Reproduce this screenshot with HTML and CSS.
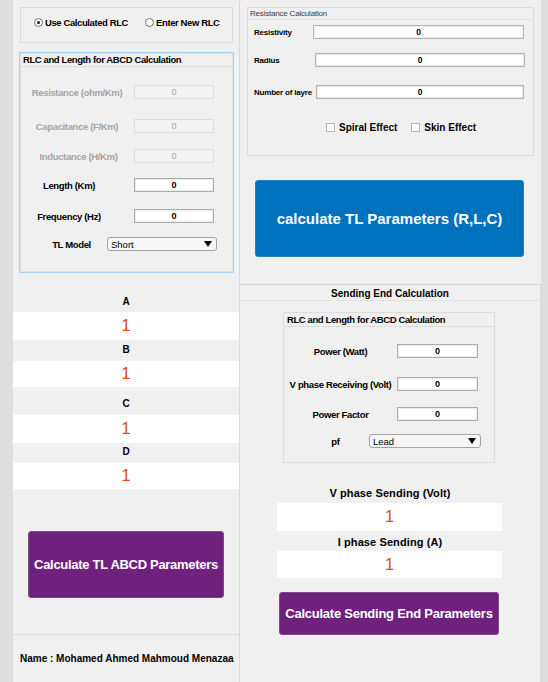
FILE: index.html
```html
<!DOCTYPE html>
<html>
<head>
<meta charset="utf-8">
<link rel="stylesheet" href="styles.css">
</head>
<body>
<div class="app">
  <div class="col-left">
    <div class="radio-box">
      <div class="radio"><span class="dot on"></span>Use Calculated RLC</div>
      <div class="radio radio-2"><span class="dot"></span>Enter New RLC</div>
    </div>

    <div class="panel panel-rlc">
      <div class="panel-title">RLC and Length for ABCD Calculation</div>
      <div class="rlc-body">
        <div class="frow">
          <div class="lbl dis">Resistance (ohm/Km)</div>
          <div class="field dis">0</div>
        </div>
        <div class="frow r2">
          <div class="lbl dis">Capacitance (F/Km)</div>
          <div class="field dis">0</div>
        </div>
        <div class="frow r3">
          <div class="lbl dis ind">Inductance (H/Km)</div>
          <div class="field dis">0</div>
        </div>
        <div class="frow r4">
          <div class="lbl en">Length (Km)</div>
          <div class="field">0</div>
        </div>
        <div class="frow r5">
          <div class="lbl en">Frequency (Hz)</div>
          <div class="field">0</div>
        </div>
        <div class="frow r6">
          <div class="lbl model">TL Model</div>
          <div class="select sel-model"><span>Short</span><svg class="caret" width="8" height="6" viewBox="0 0 8 6"><path d="M0 0H8L4 6Z" fill="#000"/></svg></div>
        </div>
      </div>
    </div>

    <div class="abcd">
      <div class="abcd-lbl la">A</div>
      <div class="abcd-val va">1</div>
      <div class="abcd-lbl lb">B</div>
      <div class="abcd-val vb">1</div>
      <div class="abcd-lbl lc">C</div>
      <div class="abcd-val va">1</div>
      <div class="abcd-lbl ld">D</div>
      <div class="abcd-val vb">1</div>
    </div>

    <div class="btn purple btn-abcd">Calculate TL ABCD Parameters</div>

    <div class="name-area">Name : Mohamed Ahmed Mahmoud Menazaa</div>
  </div>

  <div class="col-right">
    <div class="res-panel">
      <div class="res-title">Resistance Calculation</div>
      <div class="rrow rr1">
        <div class="rlbl">Resistivity</div>
        <div class="rfield w1">0</div>
      </div>
      <div class="rrow rr2">
        <div class="rlbl">Radius</div>
        <div class="rfield w2">0</div>
      </div>
      <div class="rrow rr3">
        <div class="rlbl">Number of layre</div>
        <div class="rfield w3">0</div>
      </div>
      <div class="checks">
        <div class="check"><span class="box"></span>Spiral Effect</div>
        <div class="check check-2"><span class="box"></span>Skin Effect</div>
      </div>
    </div>

    <div class="btn blue btn-tl">calculate TL Parameters (R,L,C)</div>

    <div class="sending">
      <div class="sending-title">Sending End Calculation</div>
      <div class="panel panel-send">
        <div class="panel-title">RLC and Length for ABCD Calculation</div>
        <div class="send-body">
          <div class="srow">
            <div class="slbl">Power (Watt)</div>
            <div class="field sfield">0</div>
          </div>
          <div class="srow s2">
            <div class="slbl">V phase Receiving (Volt)</div>
            <div class="field sfield">0</div>
          </div>
          <div class="srow s3">
            <div class="slbl">Power Factor</div>
            <div class="field sfield">0</div>
          </div>
          <div class="srow s4">
            <div class="slbl pf">pf</div>
            <div class="select sel-pf"><span>Lead</span><svg class="caret" width="8" height="6" viewBox="0 0 8 6"><path d="M0 0H8L4 6Z" fill="#000"/></svg></div>
          </div>
        </div>
      </div>

      <div class="out-lbl o1">V phase Sending (Volt)</div>
      <div class="out-val ov1">1</div>
      <div class="out-lbl o2">I phase Sending (A)</div>
      <div class="out-val ov2">1</div>

      <div class="btn purple btn-send">Calculate Sending End Parameters</div>
    </div>
  </div>
</div>
</body>
</html>
```

FILE: styles.css
```css
* { box-sizing: border-box; }
html, body { margin: 0; padding: 0; }
body {
  width: 548px;
  height: 682px;
  background: #dedede;
  font-family: "Liberation Sans", Arial, sans-serif;
  color: #000;
  overflow: hidden;
}
.app { display: flex; height: 682px; padding-left: 13px; }

.col-left {
  width: 227px;
  background: #f0f0f0;
  border-right: 1px solid #d9d9d9;
  display: flex;
  flex-direction: column;
}
.col-right {
  width: 301px;
  background: #f0f0f0;
  display: flex;
  flex-direction: column;
}

/* radio group */
.radio-box {
  margin: 7px 6px 0 7px;
  height: 36px;
  border: 1px solid #dadada;
  display: flex;
  align-items: flex-start;
  padding: 8px 0 0 13px;
}
.radio {
  display: flex;
  align-items: center;
  height: 12px;
  font-size: 9.5px;
  font-weight: bold;
  letter-spacing: -0.4px;
  white-space: nowrap;
}
.radio-2 { margin-left: 17px; }
.dot {
  width: 9px;
  height: 9px;
  border: 1px solid #6e6e6e;
  border-radius: 50%;
  background: #fff;
  margin-right: 2px;
  display: flex;
  align-items: center;
  justify-content: center;
}
.dot.on::after {
  content: "";
  width: 3px;
  height: 3px;
  border-radius: 50%;
  background: #1a1a1a;
}

/* panels */
.panel-rlc {
  margin: 9px 0 0 6px;
  width: 215px;
  height: 221px;
  border: 1px solid #a6d3f2;
  box-shadow: inset 0 0 0 1px #e2e2e2;
}
.panel-title {
  height: 14px;
  line-height: 13px;
  border-bottom: 1px solid #dcdcdc;
  padding-left: 3px;
  font-size: 9.5px;
  font-weight: bold;
  letter-spacing: -0.4px;
  white-space: nowrap;
}
.rlc-body { padding-top: 18px; display: flex; flex-direction: column; }
.frow { display: flex; align-items: center; height: 14px; }
.r2 { margin-top: 20px; }
.r3 { margin-top: 16px; }
.r4 { margin-top: 15px; }
.r5 { margin-top: 17px; }
.r6 { margin-top: 14px; }
.lbl {
  width: 114px;
  text-align: center;
  font-size: 9.5px;
  font-weight: bold;
  letter-spacing: -0.35px;
  white-space: nowrap;
}
.lbl.dis { color: #a4a4a4; }
.lbl.ind { padding-left: 3px; }
.lbl.en { padding-right: 16px; }
.lbl.model { width: 87px; padding-left: 16px; }

.field {
  width: 80px;
  height: 14px;
  background: #fff;
  border: 1px solid #adadad;
  box-shadow: inset 0 0 0 1px #ececec;
  font-size: 9px;
  font-weight: bold;
  text-align: center;
  line-height: 12px;
}
.field.dis {
  background: #f3f3f3;
  border-color: #dcdcdc;
  box-shadow: none;
  color: #a8a8a8;
  font-weight: normal;
}

.select {
  height: 14px;
  border: 1px solid #a3a3a3;
  border-radius: 3px;
  background: #f6f6f6;
  display: flex;
  align-items: center;
  justify-content: space-between;
  padding: 0 4px 0 3px;
  font-size: 9.5px;
}
.sel-model { width: 110px; }
.caret { display: block; }

/* ABCD */
.abcd { display: flex; flex-direction: column; }
.abcd-lbl {
  height: 12px;
  line-height: 12px;
  text-align: center;
  font-size: 10px;
  font-weight: bold;
}
.la { margin: 23px 0 4px; }
.lb { margin: 4px 0 5px; }
.lc { margin: 11px 0 5px; }
.ld { margin: 3px 0 5px; }
.abcd-val {
  background: #fff;
  text-align: center;
  color: #d95319;
  font-size: 17px;
}
.va { height: 28px; line-height: 28px; }
.vb { height: 26px; line-height: 26px; }

/* buttons */
.btn {
  color: #fff;
  font-weight: bold;
  display: flex;
  align-items: center;
  justify-content: center;
  border-radius: 3px;
  white-space: nowrap;
}
.purple { background: #70217e; border: 1px solid #7d4a87; }
.blue { background: #0071bd; border: 1px solid #2a7fbb; }
.btn-abcd {
  margin: 42px 0 0 15px;
  width: 196px;
  height: 67px;
  font-size: 13px;
  letter-spacing: -0.3px;
}
.btn-tl {
  margin: 24px 0 0 15px;
  width: 269px;
  height: 77px;
  font-size: 15px;
}
.btn-send {
  margin: 14px 0 0 39px;
  width: 220px;
  height: 43px;
  font-size: 13px;
  letter-spacing: -0.25px;
}

.name-area {
  margin-top: auto;
  height: 48px;
  border-top: 1px solid #dadada;
  padding: 18px 0 0 7px;
  line-height: 12px;
  font-size: 10px;
  font-weight: bold;
  white-space: nowrap;
}

/* resistance panel */
.res-panel {
  margin: 7px 0 0 7px;
  width: 287px;
  height: 149px;
  border: 1px solid #dcdcdc;
  display: flex;
  flex-direction: column;
}
.res-title {
  height: 12px;
  line-height: 11px;
  border-bottom: 1px solid #e2e2e2;
  padding-left: 2px;
  font-size: 8px;
  letter-spacing: -0.2px;
  color: #404040;
}
.rrow { display: flex; align-items: center; height: 14px; padding-left: 6px; }
.rr1 { margin-top: 5px; }
.rr2 { margin-top: 14px; }
.rr3 { margin-top: 18px; }
.rlbl {
  font-size: 8px;
  font-weight: bold;
  letter-spacing: -0.2px;
  white-space: nowrap;
}
.rfield {
  margin-left: auto;
  margin-right: 9px;
  height: 14px;
  background: #fff;
  border: 1px solid #b4b4b4;
  box-shadow: inset 0 0 0 1px #ececec;
  font-size: 8.5px;
  font-weight: bold;
  text-align: center;
  line-height: 12px;
}
.w1 { width: 211px; }
.w2 { width: 210px; margin-right: 8px; }
.w3 { width: 208px; }
.checks {
  display: flex;
  align-items: center;
  height: 11px;
  margin-top: 23px;
  padding-left: 78px;
}
.check {
  display: flex;
  align-items: center;
  font-size: 10px;
  font-weight: bold;
  white-space: nowrap;
}
.check-2 { margin-left: 14px; }
.box {
  width: 9px;
  height: 9px;
  background: #fff;
  border: 1px solid #b5b5b5;
  margin-right: 4px;
}

/* sending end */
.sending {
  margin-top: 27px;
  flex: 1;
  border-top: 1px solid #d4d4d4;
  border-right: 1px solid #dadada;
  display: flex;
  flex-direction: column;
}
.sending-title {
  height: 16px;
  padding-top: 2px;
  line-height: 13px;
  border-bottom: 1px solid #e2e2e2;
  text-align: center;
  font-size: 10px;
  font-weight: bold;
}
.panel-send {
  margin: 11px 0 0 43px;
  width: 212px;
  height: 151px;
  border: 1px solid #dcdcdc;
}
.send-body { padding-top: 17px; display: flex; flex-direction: column; }
.srow { display: flex; align-items: center; height: 14px; }
.s2 { margin-top: 19px; }
.s3 { margin-top: 16px; }
.s4 { margin-top: 13px; }
.slbl {
  width: 113px;
  text-align: center;
  font-size: 9.5px;
  font-weight: bold;
  letter-spacing: -0.35px;
  white-space: nowrap;
}
.slbl.pf { width: 85px; padding-left: 18px; }
.sfield { width: 81px; }
.sel-pf { width: 112px; }

.out-lbl {
  height: 12px;
  line-height: 12px;
  text-align: center;
  font-size: 11px;
  font-weight: bold;
  letter-spacing: 0.1px;
}
.o1 { margin-top: 24px; }
.o2 { margin-top: 5px; }
.out-val {
  margin-left: 37px;
  width: 225px;
  background: #fff;
  text-align: center;
  color: #d95319;
  font-size: 17px;
}
.ov1 { margin-top: 4px; height: 28px; line-height: 28px; }
.ov2 { margin-top: 3px; height: 27px; line-height: 27px; }
```
